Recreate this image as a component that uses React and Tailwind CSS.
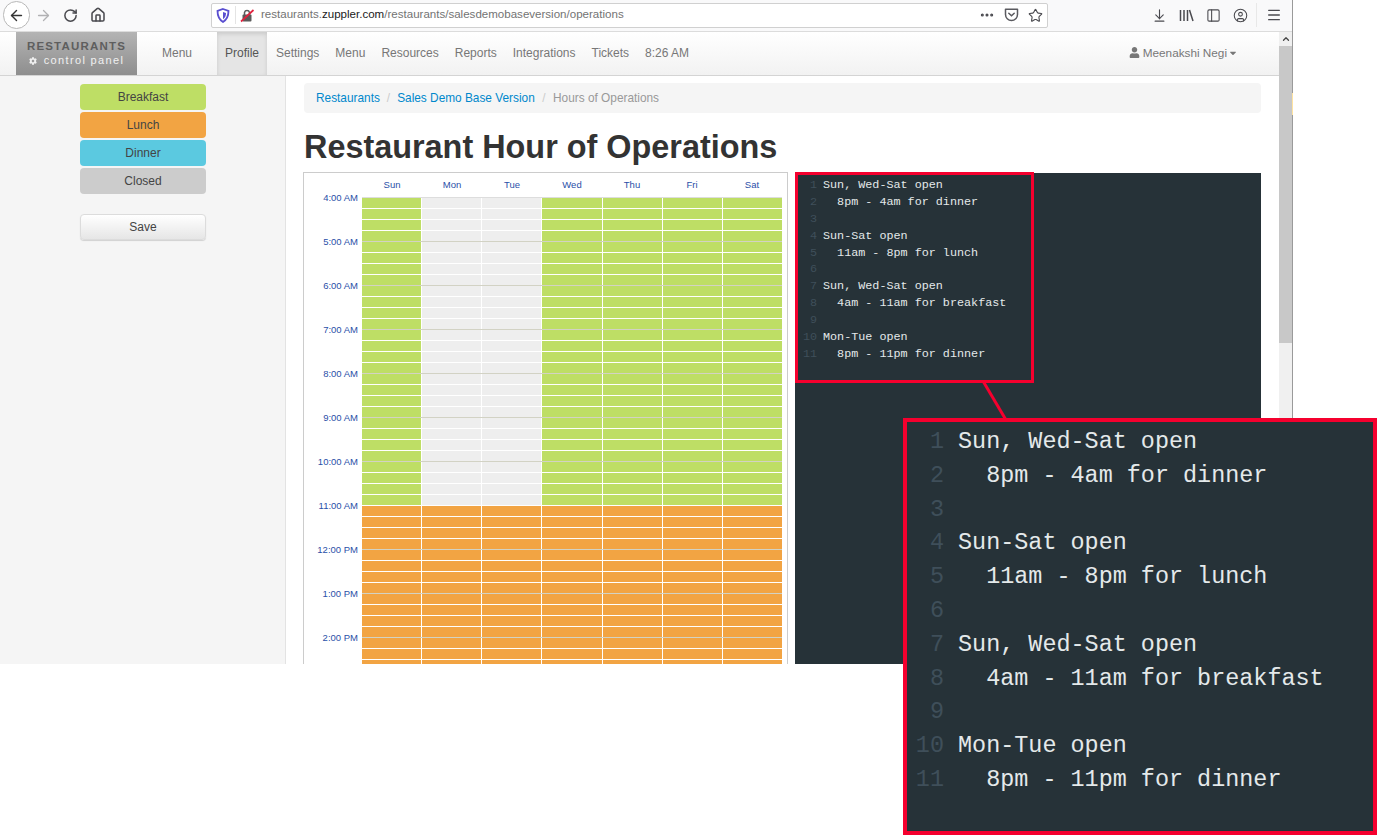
import React from "react";
import {
  ArrowLeft,
  ArrowRight,
  RotateCw,
  House,
  Ellipsis,
  Star,
  ArrowDownToLine,
  PanelLeft,
  CircleUser,
  Menu as MenuIcon,
  ChevronUp,
} from "lucide-react";
import { FaUser, FaCog, FaCaretDown } from "react-icons/fa";

const navItems = ["Settings", "Menu", "Resources", "Reports", "Integrations", "Tickets", "8:26 AM"];
const days = ["Sun", "Mon", "Tue", "Wed", "Thu", "Fri", "Sat"];
const hours = ["4:00 AM", "5:00 AM", "6:00 AM", "7:00 AM", "8:00 AM", "9:00 AM", "10:00 AM", "11:00 AM", "12:00 PM", "1:00 PM", "2:00 PM"];
const codeLines = [
  "Sun, Wed-Sat open",
  "  8pm - 4am for dinner",
  "",
  "Sun-Sat open",
  "  11am - 8pm for lunch",
  "",
  "Sun, Wed-Sat open",
  "  4am - 11am for breakfast",
  "",
  "Mon-Tue open",
  "  8pm - 11pm for dinner",
];
const mealButtons = [
  { label: "Breakfast", color: "bg-[#bede65]" },
  { label: "Lunch", color: "bg-[#f2a443]" },
  { label: "Dinner", color: "bg-[#5bc9e0]" },
  { label: "Closed", color: "bg-[#cccccc]" },
];

const ToolIcon = ({ children, className = "w-[27px]" }) => (
  <div className={`flex h-[27px] items-center justify-center text-[#4a4a4f] ${className}`}>{children}</div>
);

const Toolbar = () => (
  <div className="flex h-[32px] items-center border-b border-[#dcdcdc] bg-[#f9f9fa] pb-[1px] pl-[3px]">
    <div className="flex h-[28px] w-[27px] items-center justify-center rounded-full border border-[#b8b8b8] bg-white text-[#333]">
      <ArrowLeft size={17} strokeWidth={2} />
    </div>
    <ToolIcon className="w-[27px] text-[#b1b1b3]">
      <ArrowRight size={17} strokeWidth={1.8} className="text-[#b1b1b3]" />
    </ToolIcon>
    <ToolIcon>
      <RotateCw size={15} strokeWidth={2.4} />
    </ToolIcon>
    <ToolIcon>
      <House size={16} strokeWidth={2.3} />
    </ToolIcon>
    <div className="ml-[100px] flex h-[25px] w-[837px] items-center rounded-[2px] border border-[#d0d0d0] bg-white">
      <svg width="14" height="15" viewBox="0 0 14 15" className="ml-[4px]">
        <path d="M7 1 L12.5 2.8 C12.5 8 11 11.6 7 14 C3 11.6 1.5 8 1.5 2.8 Z" fill="none" stroke="#5a4fd0" strokeWidth="1.8" />
        <path d="M7 4 L10 5 C10 8 9 9.8 7 11.2 Z" fill="#5a4fd0" />
      </svg>
      <div className="ml-[5px] h-[18px] w-px bg-[#e4e4e4]" />
      <svg width="15" height="15" viewBox="0 0 15 15" className="ml-[4px]">
        <rect x="2.5" y="6.5" width="9" height="7" rx="1" fill="#5a5a5a" />
        <path d="M4.5 7 V4.5 a2.6 2.6 0 0 1 5 0 V7" fill="none" stroke="#5a5a5a" strokeWidth="1.5" />
        <path d="M1 13.5 L13.5 2" stroke="#e0233f" strokeWidth="1.7" />
      </svg>
      <span className="ml-[6px] text-[11.55px] text-[#737373]">
        restaurants.<span className="text-[#1a1a1a]">zuppler.com</span>/restaurants/salesdemobaseversion/operations
      </span>
      <div className="ml-auto flex items-center">
        <ToolIcon className="w-[24px]">
          <Ellipsis size={16} strokeWidth={2.6} />
        </ToolIcon>
        <ToolIcon className="w-[24px]">
          <svg width="15" height="14" viewBox="0 0 15 14" fill="none" stroke="#5a5a5f" strokeWidth="1.5">
            <path d="M1.5 1.2 H13.5 V6.5 a6 6 0 0 1 -12 0 Z" strokeLinejoin="round" />
            <path d="M4.8 5.2 L7.5 7.8 L10.2 5.2" strokeLinecap="round" />
          </svg>
        </ToolIcon>
        <ToolIcon className="w-[24px]">
          <Star size={15} strokeWidth={1.8} />
        </ToolIcon>
      </div>
    </div>
    <div className="ml-[98px] flex items-center">
      <ToolIcon>
        <ArrowDownToLine size={15} strokeWidth={1.8} />
      </ToolIcon>
      <ToolIcon>
        <svg width="15" height="13" viewBox="0 0 15 13" fill="none" stroke="#4a4a4f" strokeWidth="1.5">
          <path d="M1.5 1 V12 M5 1 V12 M8.5 1 V12 M10.5 1 L14 12" />
        </svg>
      </ToolIcon>
      <ToolIcon>
        <PanelLeft size={15} strokeWidth={1.7} />
      </ToolIcon>
      <ToolIcon>
        <CircleUser size={15} strokeWidth={1.7} />
      </ToolIcon>
      <div className="ml-[2px] h-[24px] w-px bg-[#e8e8e8]" />
      <ToolIcon className="ml-[4px] w-[26px]">
        <MenuIcon size={16} strokeWidth={2} />
      </ToolIcon>
    </div>
  </div>
);

const NavBar = () => (
  <div className="flex h-[44px] items-stretch border-b border-[#d4d4d4] bg-gradient-to-b from-white to-[#f2f2f2] pl-[16px] text-[12px] text-[#777777]">
    <div className="flex w-[121px] flex-col items-center justify-center bg-gradient-to-b from-[#b4b4b4] to-[#8e8e8e]">
      <div className="text-[11.5px] leading-[14px] font-bold tracking-[1.2px] text-[#5e5e5e]">RESTAURANTS</div>
      <div className="flex items-center gap-[7px] text-[11px] leading-[15px] tracking-[1.35px] text-[#f0f0f0]">
        <FaCog size={8} />
        control panel
      </div>
    </div>
    <div className="flex w-[80px] items-center justify-center pb-[2px]">Menu</div>
    <div className="flex w-[50px] items-center justify-center bg-[#e5e5e5] pb-[2px] text-[#555555] shadow-[inset_0_2px_4px_rgba(0,0,0,0.12)]">
      Profile
    </div>
    <div className="flex items-stretch pl-[1px]">
      {navItems.map((item) => (
        <div key={item} className="flex items-center px-[8px] pb-[2px]">
          {item}
        </div>
      ))}
    </div>
    <div className="mr-[41px] ml-auto flex items-center pb-[2px] text-[11.75px]">
      <FaUser size={11} className="mr-[3px] text-[#777777]" />
      Meenakshi Negi
      <FaCaretDown size={10} className="ml-[1px]" />
    </div>
  </div>
);

const Sidebar = () => (
  <div className="w-[286px] shrink-0 border-r border-[#e3e3e3] bg-[#f5f5f5] pt-[8px] pl-[80px] text-[12px] text-[#444444]">
    {mealButtons.map((meal) => (
      <div key={meal.label} className={`mb-[2px] flex h-[26px] w-[126px] items-center justify-center rounded-[4px] ${meal.color}`}>
        {meal.label}
      </div>
    ))}
    <div className="mt-[20px] flex h-[26px] w-[126px] items-center justify-center rounded-[4px] border border-[#dcdcdc] bg-gradient-to-b from-white to-[#e6e6e6] shadow-[0_1px_1px_rgba(0,0,0,0.15)]">
      Save
    </div>
  </div>
);

const cellColor = (row, col) => {
  if (row >= 28) return "bg-[#f2a443]";
  return col === 1 || col === 2 ? "bg-[#eeeeee]" : "bg-[#bede65]";
};

const Calendar = () => (
  <div className="-mt-px -ml-px h-[600px] w-[485px] shrink-0 border border-[#cccccc]">
    <div className="flex h-[24px] pl-[58px]">
      {days.map((d) => (
        <div key={d} className="flex w-[60px] items-center justify-center text-[9.5px] text-[#2a4fa8]">
          {d}
        </div>
      ))}
    </div>
    <div className="flex">
      <div className="-mt-[5px] w-[54px] shrink-0 text-right text-[9.5px] leading-[12px] text-[#2a4fa8]">
        {hours.map((h) => (
          <div key={h} className="h-[44px]">
            {h}
          </div>
        ))}
      </div>
      <div className="ml-[4px] w-[420px] border-t border-[#dddddd]">
        {Array.from({ length: 44 }, (_, row) => (
          <div
            key={row}
            className={`grid h-[11px] grid-cols-7 gap-x-px border-b ${row % 4 === 3 && row !== 27 ? "border-[#d2d2c4]" : "border-white"}`}
          >
            {days.map((d, col) => (
              <div key={d} className={cellColor(row, col)} />
            ))}
          </div>
        ))}
      </div>
    </div>
  </div>
);

const SmallCode = () => (
  <div className="h-[600px] w-[466px] bg-[#263238] pt-[4px] font-['Liberation_Mono',monospace] text-[11.75px] leading-[16.9px] text-[#e4e9ea]">
    {codeLines.map((line, i) => (
      <div key={i} className="flex h-[16.9px]">
        <span className="w-[22px] shrink-0 text-right text-[#3f4f5a]">{i + 1}</span>
        <span className="ml-[6px] whitespace-pre">{line}</span>
      </div>
    ))}
  </div>
);

const Callout = () => (
  <>
    <svg width="30" height="42" viewBox="0 0 30 42" className="absolute top-[380px] left-[980px]">
      <path d="M3 1 L26 40" stroke="#f5002e" strokeWidth="3" />
    </svg>
    <div className="absolute top-[172px] left-[795px] h-[211px] w-[239px] border-[3px] border-[#f5002e]" />
    <div className="absolute top-[418px] left-[903px] h-[417px] w-[474px] border-[4px] border-[#f5002e] bg-[#263238] pt-[3px] font-['Liberation_Mono',monospace] text-[23.45px] leading-[33.8px] text-[#e4e9ea]">
      {codeLines.map((line, i) => (
        <div key={i} className="flex h-[33.8px]">
          <span className="w-[37px] shrink-0 text-right text-[#3f4f5a]">{i + 1}</span>
          <span className="ml-[14px] whitespace-pre">{line}</span>
        </div>
      ))}
    </div>
  </>
);

const Scrollbar = () => (
  <div className="flex w-[13px] shrink-0 flex-col bg-[#f0f0f0]">
    <div className="flex h-[14px] items-center justify-center text-[#444444]">
      <ChevronUp size={10} strokeWidth={3} />
    </div>
    <div className="h-[297px] bg-[#c8c8c8]" />
  </div>
);

export default function App() {
  return (
    <div className="relative h-[835px] w-[1377px] overflow-hidden bg-white font-['Liberation_Sans',Arial,sans-serif]">
      <div className="flex h-[664px] w-[1293px] flex-col overflow-hidden border-r border-[#9a9a9a]">
        <Toolbar />
        <div className="flex min-h-0 flex-1">
          <div className="flex min-w-0 flex-1 flex-col">
            <NavBar />
            <div className="flex min-h-0 flex-1">
              <Sidebar />
              <div className="min-w-0 flex-1 px-[18px] pt-[7px]">
                <div className="flex h-[30px] items-center rounded-[4px] bg-[#f5f5f5] pt-[1px] pl-[12px] text-[11.85px] text-[#999999]">
                  <span className="text-[#0088cc]">Restaurants</span>
                  <span className="px-[7px] text-[#cccccc]">/</span>
                  <span className="text-[#0088cc]">Sales Demo Base Version</span>
                  <span className="px-[7.5px] text-[#cccccc]">/</span>
                  <span>Hours of Operations</span>
                </div>
                <h1 className="flex h-[60px] items-center pt-[8px] text-[32.4px] font-bold text-[#333333]">
                  Restaurant Hour of Operations
                </h1>
                <div className="flex items-start gap-[7px]">
                  <Calendar />
                  <SmallCode />
                </div>
              </div>
            </div>
          </div>
          <Scrollbar />
        </div>
      </div>
      <div className="absolute top-[93px] left-[1292px] h-[22px] w-px bg-[#ffe3a0]" />
      <Callout />
    </div>
  );
}
